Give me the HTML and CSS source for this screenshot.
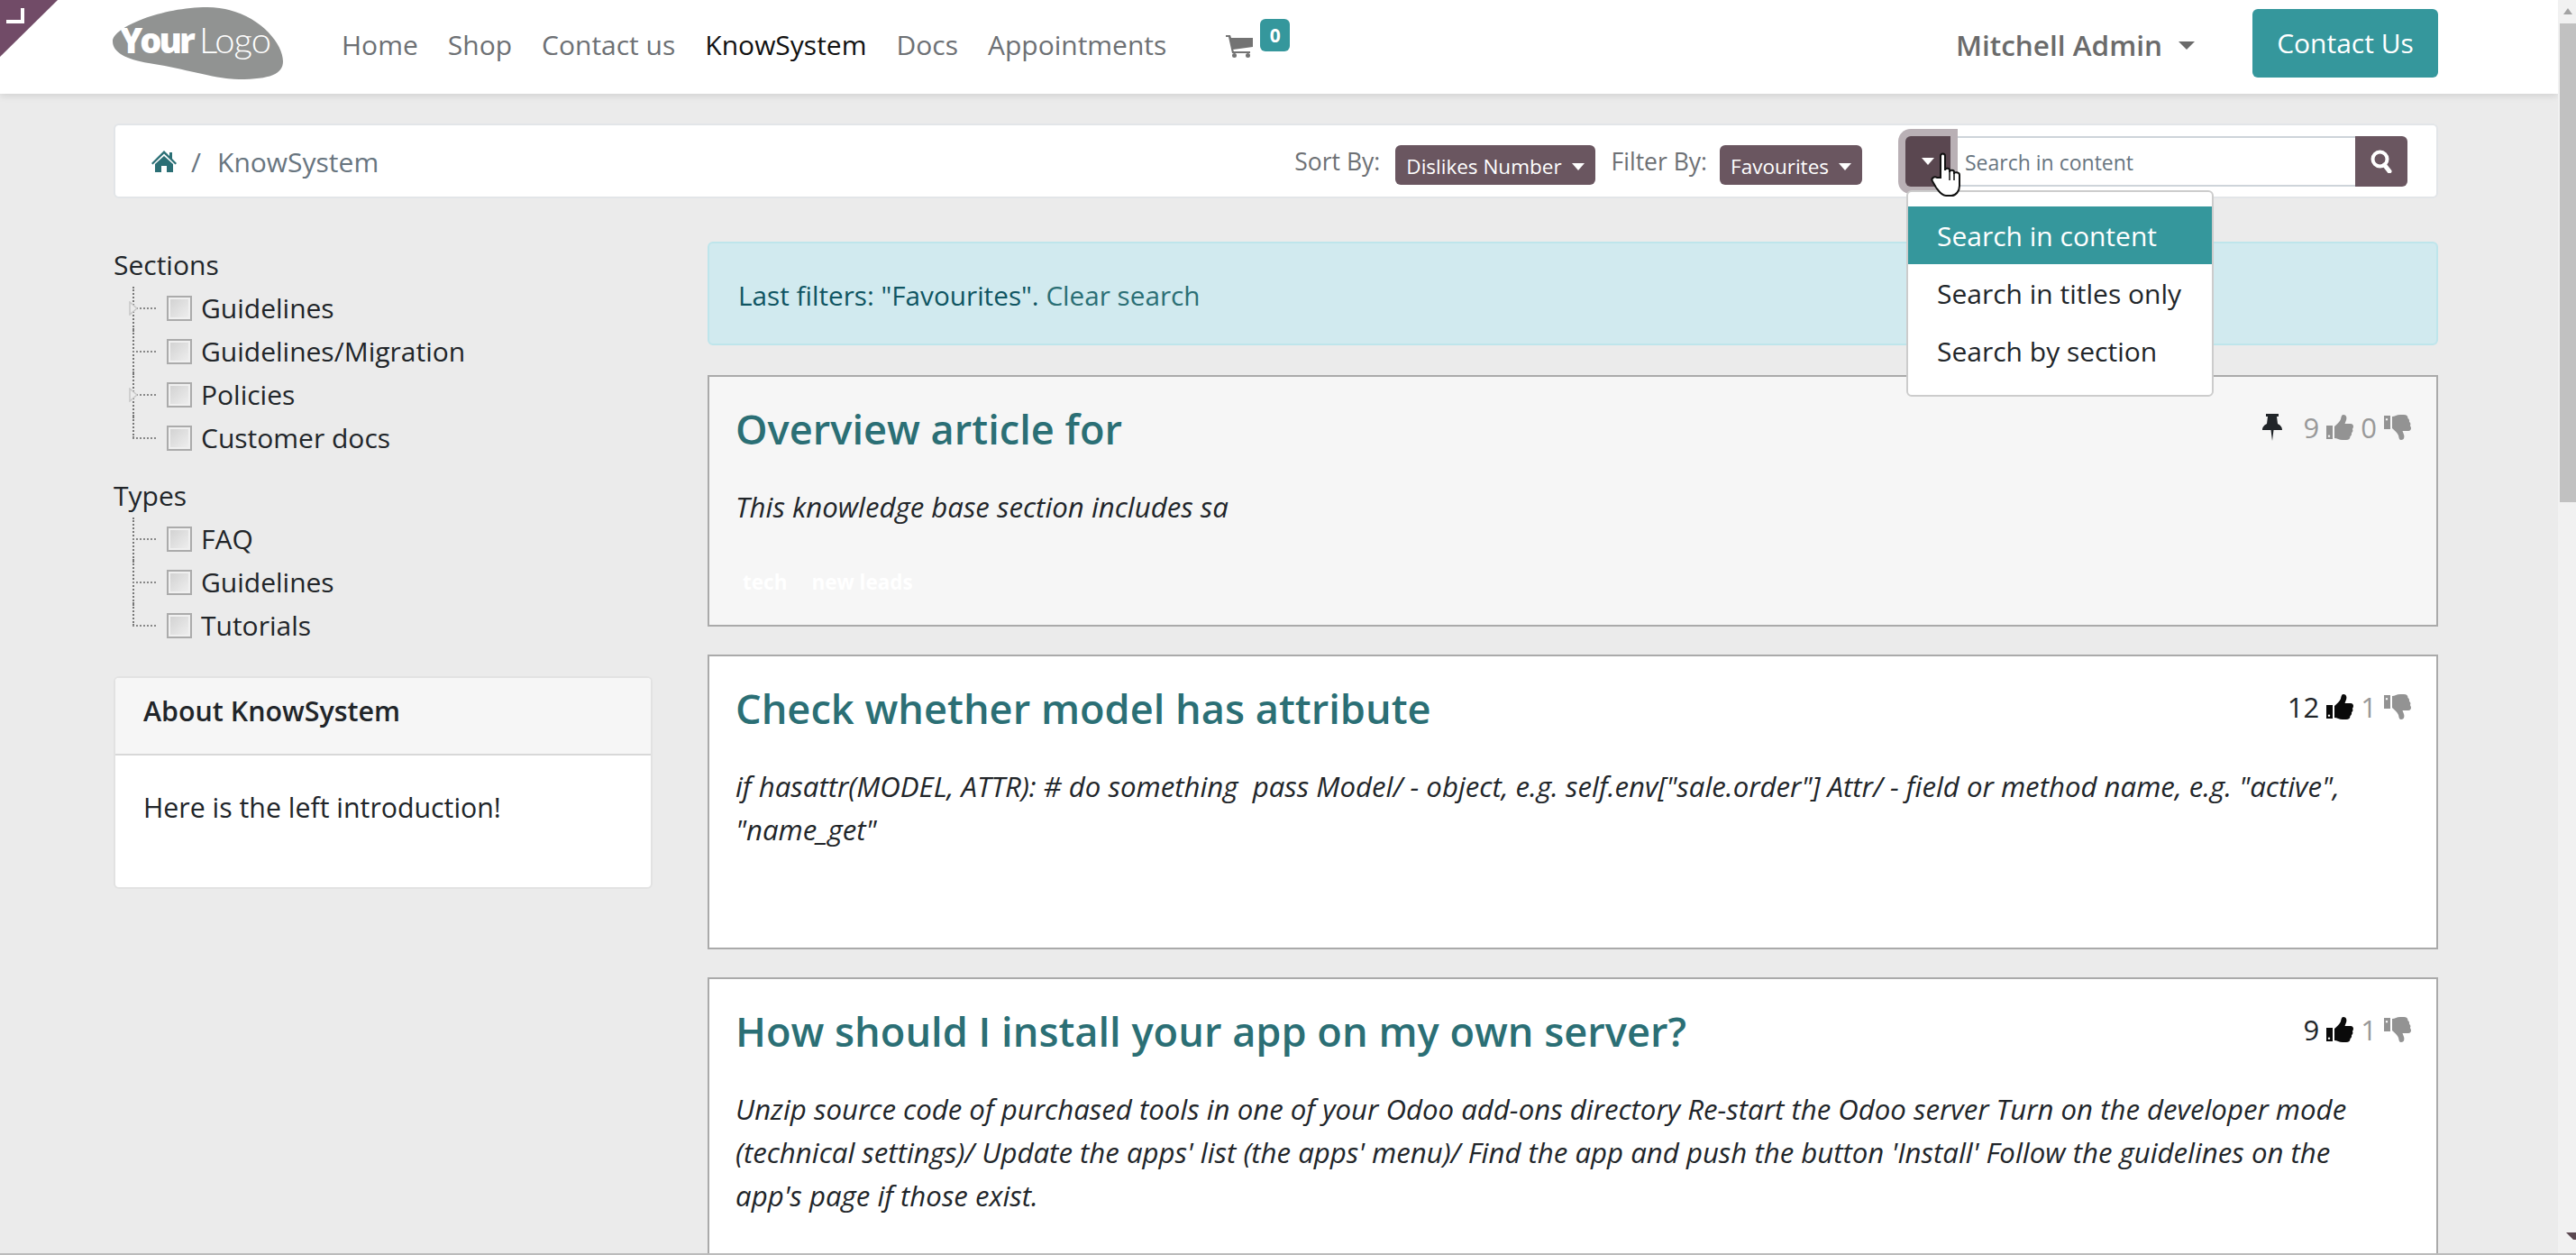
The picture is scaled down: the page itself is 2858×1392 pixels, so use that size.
FILE: index.html
```html
<!DOCTYPE html>
<html lang="en">
<head>
    <meta charset="UTF-8">
    <title>KnowSystem</title>
    <link rel="stylesheet" href="styles.css">
</head>
<body>
    <svg class="ribbon" width="66" height="64" viewBox="0 0 66 64">
        <polygon points="0,0 64,0 0,63" fill="#714b67"/>
        <path d="M25 9V24H7" fill="none" stroke="#fff" stroke-width="4"/>
    </svg>

    <div class="page">
        <header class="topbar">
            <svg class="logo" width="190" height="82" viewBox="125 7 190 82">
                <path d="M230 8C280 8 314 45 314 68C314 82 300 88 265 88C240 88 200 75 165 70C140 66 125 58 125 46C125 30 180 8 230 8Z" fill="#919392"/>
                <text x="133" y="59" class="logo-your">Your</text>
                <text x="221" y="59" class="logo-logo">Logo</text>
            </svg>
            <nav class="nav">
                <a>Home</a>
                <a>Shop</a>
                <a>Contact us</a>
                <a class="active">KnowSystem</a>
                <a>Docs</a>
                <a>Appointments</a>
            </nav>
            <div class="cart">
                <svg width="30" height="26" viewBox="0 0 30 26">
                    <path d="M0 1H5L6 4H30V14L8 17L9 19H27V21H7L3 3H0Z" fill="#737373"/>
                    <circle cx="9.500" cy="23.500" r="2.500" fill="#737373"/>
                    <circle cx="24.500" cy="23.500" r="2.500" fill="#737373"/>
                </svg>
                <span class="badge">0</span>
            </div>
            <div class="user">Mitchell Admin<i class="caret"></i></div>
            <a class="btn-contact">Contact Us</a>
        </header>

        <main class="wrap">
            <div class="crumbbar">
                <div class="crumbs">
                    <svg width="28" height="24" viewBox="0 0 28 24">
                        <path d="M14 0L20 6V2H23V9L28 14L26.500 15.500L14 3.500L1.500 15.500L0 14Z M14 6L24 15V24H17V17H11V24H4V15Z" fill="#2b6f75"/>
                    </svg>
                    <span class="sep">/</span>
                    <span>KnowSystem</span>
                </div>
                <div class="tools">
                    <span class="tool-label">Sort By:</span>
                    <a class="btn-tool">Dislikes Number<i class="caret caret-sm"></i></a>
                    <span class="tool-label tight">Filter By:</span>
                    <a class="btn-tool">Favourites<i class="caret caret-sm"></i></a>
                    <div class="search">
                        <a class="search-toggle"><i class="caret caret-sm"></i></a>
                        <div class="search-input">Search in content</div>
                        <a class="search-go">
                            <svg width="24" height="26" viewBox="0 0 24 26">
                                <circle cx="10.500" cy="10.500" r="8" fill="none" stroke="#fff" stroke-width="4"/>
                                <path d="M15.500 17L21 24" stroke="#fff" stroke-width="5" stroke-linecap="round"/>
                            </svg>
                        </a>
                        <div class="search-menu">
                            <div class="search-item active">Search in content</div>
                            <div class="search-item">Search in titles only</div>
                            <div class="search-item">Search by section</div>
                        </div>
                        <svg class="pointer" width="38" height="50" viewBox="0 0 38 50">
                            <path d="M11 28V4a2.500 2.500 0 0 1 5 0V20c0-3 5-3 5 0v2c0-3 5-3 5 0v2c0-3 6-2 6 1V37c0 6-4 11-9 11h-6c-5 0-8-5-11-9L2 32c-2-3 2-6 5-4z" fill="#fff" stroke="#111" stroke-width="2"/>
                            <path d="M21 21V31M26 23V31" stroke="#111" stroke-width="1.500"/>
                        </svg>
                    </div>
                </div>
            </div>

            <div class="columns">
                <aside class="side">
                    <div class="tree-title">Sections</div>
                    <ul class="tree">
                        <li><svg class="twisty" width="10" height="16" viewBox="0 0 10 16"><path d="M1 1L9 8L1 15Z" fill="#ebebeb" stroke="#c8c8c8" stroke-width="1.500"/></svg><i class="check"></i>Guidelines</li>
                        <li><i class="check"></i>Guidelines/Migration</li>
                        <li><svg class="twisty" width="10" height="16" viewBox="0 0 10 16"><path d="M1 1L9 8L1 15Z" fill="#ebebeb" stroke="#c8c8c8" stroke-width="1.500"/></svg><i class="check"></i>Policies</li>
                        <li><i class="check"></i>Customer docs</li>
                    </ul>
                    <div class="tree-title types">Types</div>
                    <ul class="tree">
                        <li><i class="check"></i>FAQ</li>
                        <li><i class="check"></i>Guidelines</li>
                        <li><i class="check"></i>Tutorials</li>
                    </ul>
                    <div class="about">
                        <div class="about-head">About KnowSystem</div>
                        <div class="about-body">Here is the left introduction!</div>
                    </div>
                </aside>

                <section class="content">
                    <div class="alert">Last filters: "Favourites". <a>Clear search</a></div>

                    <article class="post pinned">
                        <div class="post-head">
                            <h2>Overview article for</h2>
                            <div class="votes">
                                <svg class="pin" width="22" height="30" viewBox="0 0 22 30">
                                    <path d="M4 0H18V3H16L17 11C19 12 22 14 22 18H12.500L11 30L9.500 18H0C0 14 3 12 5 11L6 3H4Z" fill="#212529"/>
                                </svg>
                                <span class="num dim">9</span>
                                <svg class="thumb dim" width="30" height="28" viewBox="0 0 30 28"><use href="#thumb-up"/></svg>
                                <span class="num dim">0</span>
                                <svg class="thumb dim" width="30" height="28" viewBox="0 0 30 28"><use href="#thumb-down"/></svg>
                            </div>
                        </div>
                        <p class="post-text">This knowledge base section includes sa</p>
                        <div class="tags"><span>tech</span><span>new leads</span></div>
                    </article>

                    <article class="post">
                        <div class="post-head">
                            <h2>Check whether model has attribute</h2>
                            <div class="votes">
                                <span class="num">12</span>
                                <svg class="thumb" width="30" height="28" viewBox="0 0 30 28"><use href="#thumb-up"/></svg>
                                <span class="num dim">1</span>
                                <svg class="thumb dim" width="30" height="28" viewBox="0 0 30 28"><use href="#thumb-down"/></svg>
                            </div>
                        </div>
                        <p class="post-text">if hasattr(MODEL, ATTR): # do something &nbsp;pass Model/ - object, e.g. self.env["sale.order"] Attr/ - field or method name, e.g. "active",<br>"name_get"</p>
                        <div class="tags"></div>
                    </article>

                    <article class="post">
                        <div class="post-head">
                            <h2>How should I install your app on my own server?</h2>
                            <div class="votes">
                                <span class="num">9</span>
                                <svg class="thumb" width="30" height="28" viewBox="0 0 30 28"><use href="#thumb-up"/></svg>
                                <span class="num dim">1</span>
                                <svg class="thumb dim" width="30" height="28" viewBox="0 0 30 28"><use href="#thumb-down"/></svg>
                            </div>
                        </div>
                        <p class="post-text">Unzip source code of purchased tools in one of your Odoo add-ons directory Re-start the Odoo server Turn on the developer mode<br>(technical settings)/ Update the apps' list (the apps' menu)/ Find the app and push the button 'Install' Follow the guidelines on the<br>app's page if those exist.</p>
                    </article>
                </section>
            </div>
        </main>
    </div>

    <div class="rail">
        <svg class="rail-arrow" width="18" height="12" viewBox="0 0 18 12"><path d="M9 3L14 10H4Z" fill="#a3a3a3"/></svg>
        <div class="rail-thumb"></div>
        <svg class="rail-down" width="18" height="10" viewBox="0 0 18 10"><path d="M7 1H18V9H15Z" fill="#5a4750"/></svg>
    </div>

    <!-- thumbs shared by the vote counters -->
    <svg class="defs" width="0" height="0">
        <defs>
            <g id="thumb-up">
                <path fill-rule="evenodd" d="M0 12H7V27H0Z M3 22.500a1.200 1.200 0 1 0 .01 0Z"/>
                <path d="M9 13C12 10 15 8 16 5C16.500 2 17 0 19 0C22 0 23 3 22 6L20.500 10H27C29 10 30 11.500 30 13C30 14.500 29 15.500 29 16C30 18 29 19.500 28 20C28.500 22 27.500 23.500 26.500 24C26.500 26.500 25 28 22 28H18C14 28 12 26 9 26Z"/>
            </g>
            <g id="thumb-down">
                <path fill-rule="evenodd" d="M0 1H7V16H0Z M3 4a1.200 1.200 0 1 0 .01 0Z"/>
                <path d="M9 2C12 2 14 0 18 0H22C25 0 26.500 1.500 26.500 4C27.500 4.500 28.500 6 28 8C29 8.500 30 10 29 12C29 12.500 30 13.500 30 15C30 16.500 29 18 27 18H20.500L22 22C23 25 22 28 19 28C17 28 16.500 26 16 23C15 20 12 18 9 15Z"/>
            </g>
        </defs>
    </svg>
</body>
</html>
```

FILE: styles.css
```css
* {
    box-sizing: border-box;
    margin: 0;
    padding: 0;
}

html, body {
    height: 100%;
    overflow: hidden;
}

body {
    display: flex;
    background: #ebebeb;
    border-bottom: 2px solid #bbb;
    font-family: "Open Sans", "Noto Sans", sans-serif;
    font-size: 30px;
    line-height: 48px;
    color: #212529;
}

a {
    color: inherit;
    text-decoration: none;
}

.page {
    flex: 1;
    min-width: 0;
    display: flex;
    flex-direction: column;
    overflow: hidden;
}

.ribbon {
    position: absolute;
    top: 0;
    left: 0;
    z-index: 5;
}

.defs {
    position: absolute;
}

/* Top bar */
.topbar {
    display: flex;
    flex-shrink: 0;
    align-items: center;
    height: 104px;
    padding: 0 133px 4px 125px;
    background: #fff;
    box-shadow: 0 2px 8px rgba(0, 0, 0, 0.12);
}

.logo {
    margin-right: 64px;
    margin-bottom: 4px;
    flex-shrink: 0;
}

.logo-your {
    font-family: "Open Sans", sans-serif;
    font-size: 38px;
    font-weight: 800;
    letter-spacing: -3px;
    fill: #fff;
}

.logo-logo {
    font-family: "Lato", sans-serif;
    font-size: 40px;
    font-weight: 300;
    letter-spacing: -1px;
    fill: #fff;
}

.nav {
    display: flex;
    gap: 33px;
    color: #6d7074;
}

.nav .active {
    color: #111;
}

.cart {
    display: flex;
    align-items: flex-start;
    gap: 8px;
    align-self: flex-start;
    margin: 21px 0 0 66px;
}

.cart svg {
    margin-top: 17px;
}

.badge {
    width: 33px;
    height: 36px;
    border-radius: 6px;
    background: #35979c;
    color: #fff;
    font-size: 21px;
    font-weight: 700;
    line-height: 36px;
    text-align: center;
}

.user {
    display: flex;
    align-items: center;
    margin-left: auto;
    margin-right: 64px;
    color: #6b6b6b;
    font-size: 31.500px;
    font-weight: 600;
}

.caret {
    width: 0;
    height: 0;
    margin-left: 18px;
    border-top: 9px solid currentColor;
    border-left: 9px solid transparent;
    border-right: 9px solid transparent;
}

.caret-sm {
    display: inline-block;
    margin-left: 11px;
    border-top-width: 8px;
    border-left-width: 7px;
    border-right-width: 7px;
    vertical-align: 4px;
}

.btn-contact {
    display: flex;
    align-items: center;
    justify-content: center;
    width: 206px;
    height: 76px;
    margin-bottom: 4px;
    border-radius: 6px;
    background: #35979c;
    color: #fff;
}

/* Breadcrumb bar */
.wrap {
    flex: 1;
    min-height: 0;
    overflow: hidden;
    padding: 33px 133px 0 126px;
}

.crumbbar {
    display: flex;
    align-items: center;
    justify-content: space-between;
    height: 83px;
    padding: 0 32px 0 40px;
    background: #fff;
    border: 2px solid #e2e5e8;
    border-radius: 6px;
}

.crumbs {
    display: flex;
    align-items: center;
    padding-top: 3px;
    color: #68757f;
}

.crumbs svg {
    margin-top: -3px;
}

.sep {
    margin: 0 18px 0 16px;
}

.tools {
    display: flex;
    align-items: center;
    padding-top: 1px;
}

.tool-label {
    margin-right: 17px;
    color: #6d7074;
    font-size: 26.500px;
}

.tool-label.tight {
    margin-right: 14px;
}

.btn-tool {
    height: 44px;
    margin: 8px 18px 0 0;
    padding: 0 12px;
    border-radius: 6px;
    background: #6a5660;
    color: #fff;
    font-size: 22.500px;
    line-height: 47px;
    white-space: nowrap;
}

.search {
    position: relative;
    display: flex;
    width: 557px;
    height: 56px;
    margin-left: 30px;
}

.search-toggle {
    position: relative;
    display: flex;
    align-items: center;
    justify-content: center;
    width: 50px;
    border-radius: 6px 0 0 6px;
    background: #5a4750;
    color: #fff;
    box-shadow: 0 0 0 8px #b9b0b5;
}

.search-toggle .caret-sm {
    margin-left: 0;
    vertical-align: 0;
}

.search-input {
    flex: 1;
    padding-left: 16px;
    border-top: 2px solid #ced4da;
    border-bottom: 2px solid #ced4da;
    color: #68757f;
    font-size: 23px;
    line-height: 54px;
}

.search-go {
    display: flex;
    align-items: center;
    justify-content: center;
    width: 58px;
    border-radius: 0 6px 6px 0;
    background: #6a5660;
}

.search-menu {
    position: absolute;
    top: 60px;
    left: 1px;
    z-index: 3;
    width: 341px;
    padding: 16px 0 17px;
    background: #fff;
    border: 2px solid #ccc;
    border-radius: 6px;
}

.search-item {
    height: 64px;
    padding-left: 32px;
    line-height: 65px;
    white-space: nowrap;
}

.search-item.active {
    background: #35979c;
    color: #fff;
}

.pointer {
    position: absolute;
    top: 18px;
    left: 28px;
    z-index: 4;
}

/* Columns */
.columns {
    display: grid;
    grid-template-columns: 598px 1fr;
    column-gap: 61px;
    padding-top: 48px;
}

.side {
    padding-top: 2px;
}

.tree-title.types {
    margin-top: 16px;
}

.tree {
    list-style: none;
}

.tree li {
    position: relative;
    display: flex;
    align-items: center;
    gap: 10px;
    height: 48px;
    padding-left: 59px;
}

.tree li::before {
    content: "";
    position: absolute;
    top: 0;
    left: 21px;
    height: 100%;
    border-left: 2px dotted #777;
}

.tree li:last-child::before {
    height: 50%;
}

.tree li::after {
    content: "";
    position: absolute;
    top: 23px;
    left: 21px;
    width: 26px;
    border-top: 2px dotted #888;
}

.twisty {
    position: absolute;
    top: 16px;
    left: 17px;
    z-index: 1;
}

.check {
    width: 28px;
    height: 28px;
    border: 2px solid #ababab;
    background: linear-gradient(135deg, #d0d0d0, #f0f0f0);
    box-shadow: inset 0 0 0 2px #f0f0f0;
}

.about {
    margin-top: 32px;
    background: #fff;
    border: 2px solid #e2e2e2;
    border-radius: 6px;
    overflow: hidden;
}

.about-head {
    height: 86px;
    padding: 0 31px;
    background: #f6f6f6;
    border-bottom: 2px solid #d8d8d8;
    font-weight: 600;
    font-size: 30.400px;
    line-height: 74px;
}

.about-body {
    height: 146px;
    padding: 34px 31px 0;
    font-size: 30.300px;
}

/* Articles */
.alert {
    height: 115px;
    padding: 34px 32px 0;
    margin-bottom: 33px;
    background: #d1eaef;
    border: 2px solid #bee5eb;
    border-radius: 6px;
    color: #0f5562;
    font-size: 29.700px;
    line-height: 47px;
}

.alert a {
    color: #2b6f75;
}

.post {
    padding: 28px 28px 0 29px;
    margin-bottom: 31px;
    background: #fff;
    border: 2px solid #aaa;
}

.post:last-child {
    height: 340px;
    margin-bottom: 0;
}

.post.pinned {
    background: #f6f6f6;
}

.post-head {
    display: flex;
    justify-content: space-between;
    height: 62px;
}

.post-head h2 {
    color: #2b6f75;
    font-size: 45.200px;
    font-weight: 600;
    line-height: 60px;
}

.votes {
    display: flex;
    align-items: center;
    gap: 8px;
    height: 44px;
    margin-top: 6px;
}

.num {
    font-size: 31px;
}

.dim {
    color: #999;
}

.thumb {
    fill: #0a0a0a;
}

.thumb.dim {
    fill: #939393;
}

.pin {
    margin-right: 16px;
}

.post-text {
    margin-top: 30px;
    font-size: 31.200px;
    font-style: italic;
    white-space: nowrap;
}

.tags {
    display: flex;
    gap: 27px;
    height: 107px;
    padding: 43px 8px 0;
    color: #fff;
    font-size: 22.500px;
    font-weight: 700;
    line-height: 34px;
}

/* Scrollbar */
.rail {
    display: flex;
    flex-direction: column;
    flex: 0 0 20px;
    padding-left: 2px;
    background: #f1f1f1;
}

.rail-arrow {
    display: block;
    margin-top: 6px;
    margin-bottom: 8px;
}

.rail-thumb {
    height: 531px;
    background: #c1c1c1;
}

.rail-down {
    margin-top: auto;
    margin-bottom: 14px;
}
```
